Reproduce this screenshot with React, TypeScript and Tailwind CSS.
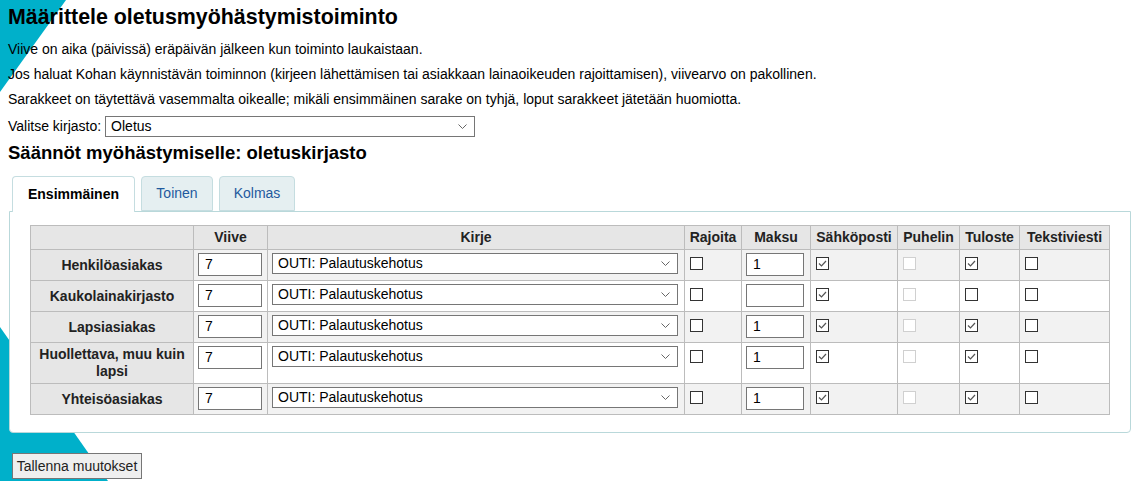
const rows = [
    { name: 'Henkilöasiakas', fee: '1', email: true, print: true },
    { name: 'Kaukolainakirjasto', fee: '', email: true, print: false },
    { name: 'Lapsiasiakas', fee: '1', email: true, print: true },
    { name: 'Huollettava, muu kuin lapsi', fee: '1', email: true, print: true },
    { name: 'Yhteisöasiakas', fee: '1', email: true, print: true },
]

function Chevron() {
    return (
        <svg width="9" height="5" viewBox="0 0 9 5" className="shrink-0">
            <polyline points="0.5,0.5 4.5,4.5 8.5,0.5" fill="none" stroke="#666" strokeWidth="1" />
        </svg>
    )
}

function Select({ value, className }: { value: string; className: string }) {
    return (
        <div
            className={`flex items-center justify-between border border-[#767676] bg-white pr-[7px] pl-[5px] text-[14px] text-black ${className}`}
        >
            <span>{value}</span>
            <Chevron />
        </div>
    )
}

function Box({ checked, disabled }: { checked?: boolean; disabled?: boolean }) {
    return (
        <span
            className={`mt-[4px] ml-[1px] flex h-[13px] w-[13px] items-center justify-center border bg-white ${
                disabled ? 'border-[#d0d0d0]' : 'border-[#333]'
            }`}
        >
            {checked && (
                <svg width="9" height="7" viewBox="0 0 9 7">
                    <polyline points="1,3.5 3.5,6 8,1" fill="none" stroke="#555" strokeWidth="1.2" />
                </svg>
            )}
        </span>
    )
}

function TextBox({ value, className }: { value: string; className: string }) {
    return (
        <div
            className={`flex h-[23px] items-center border border-[#767676] bg-white px-[6px] text-[14px] text-black ${className}`}
        >
            {value}
        </div>
    )
}

export default function App() {
    const cell = 'border border-[#bcbcbc] px-[4px] pt-[3px] pb-[4px] align-top'
    const head = 'border border-[#bcbcbc] bg-[#e6e6e6] px-[2px] py-[3px] text-[14px] leading-[17px] font-bold text-[#222]'

    return (
        <div className="relative min-h-[499px] bg-white font-['Liberation_Sans',Arial,sans-serif] text-black">
            <svg className="absolute top-0 left-0" width="140" height="499" viewBox="0 0 140 499">
                <polygon points="0,0 66,0 0,92" fill="#00b0ca" />
                <polygon points="0,327 108,481 0,481" fill="#00b0ca" />
            </svg>

            <div className="relative px-[8px] pt-[4px]">
                <h1 className="text-[21.4px] leading-[26px] font-bold">Määrittele oletusmyöhästymistoiminto</h1>

                <p className="mt-[11px] text-[14px] leading-[17px]">
                    Viive on aika (päivissä) eräpäivän jälkeen kun toiminto laukaistaan.
                </p>
                <p className="mt-[8px] text-[14px] leading-[17px]">
                    Jos haluat Kohan käynnistävän toiminnon (kirjeen lähettämisen tai asiakkaan lainaoikeuden
                    rajoittamisen), viivearvo on pakollinen.
                </p>
                <p className="mt-[8px] text-[14px] leading-[17px]">
                    Sarakkeet on täytettävä vasemmalta oikealle; mikäli ensimmäinen sarake on tyhjä, loput sarakkeet
                    jätetään huomiotta.
                </p>

                <div className="mt-[8px] flex items-center gap-[4px] text-[14px]">
                    <span>Valitse kirjasto:</span>
                    <Select value="Oletus" className="h-[21px] w-[370px]" />
                </div>

                <h3 className="mt-[5px] text-[18.5px] leading-[22px] font-bold">
                    Säännöt myöhästymiselle: oletuskirjasto
                </h3>

                <div className="mt-[12px] ml-[4px] flex gap-[6px] text-[14px]">
                    <div className="relative z-10 -mb-px flex h-[36px] w-[123px] items-center justify-center rounded-t-[4px] border border-b-0 border-[#c5dde0] bg-white font-bold">
                        Ensimmäinen
                    </div>
                    <div className="flex h-[35px] w-[72px] items-center justify-center rounded-t-[4px] border border-[#c5dde0] bg-[#e5eff1] text-[#1f5a9e]">
                        Toinen
                    </div>
                    <div className="flex h-[35px] w-[76px] items-center justify-center rounded-t-[4px] border border-[#c5dde0] bg-[#e5eff1] text-[#1f5a9e]">
                        Kolmas
                    </div>
                </div>

                <div className="ml-[1px] w-[1122px] rounded-b-[4px] border border-[#b9d8da] bg-white pt-[13px] pb-[17px] pl-[20px]">
                    <table className="w-[1079px] table-fixed border-collapse text-[14px]">
                        <colgroup>
                            <col className="w-[163px]" />
                            <col className="w-[74px]" />
                            <col className="w-[417px]" />
                            <col className="w-[57px]" />
                            <col className="w-[69px]" />
                            <col className="w-[87px]" />
                            <col className="w-[62px]" />
                            <col className="w-[60px]" />
                            <col className="w-[90px]" />
                        </colgroup>
                        <thead>
                            <tr>
                                <th className={head}></th>
                                <th className={head}>Viive</th>
                                <th className={head}>Kirje</th>
                                <th className={head}>Rajoita</th>
                                <th className={head}>Maksu</th>
                                <th className={head}>Sähköposti</th>
                                <th className={head}>Puhelin</th>
                                <th className={head}>Tuloste</th>
                                <th className={head}>Tekstiviesti</th>
                            </tr>
                        </thead>
                        <tbody>
                            {rows.map((r, i) => (
                                <tr key={r.name} className={i % 2 === 0 ? 'bg-[#f2f2f2]' : 'bg-white'}>
                                    <th className="border border-[#bcbcbc] bg-[#e6e6e6] px-[4px] py-[3px] text-center align-middle text-[14px] leading-[17px] font-bold text-[#222]">
                                        {r.name}
                                    </th>
                                    <td className={cell}>
                                        <TextBox value="7" className="w-[64px]" />
                                    </td>
                                    <td className={cell}>
                                        <Select value="OUTI: Palautuskehotus" className="h-[21px] w-[406px]" />
                                    </td>
                                    <td className={cell}>
                                        <Box />
                                    </td>
                                    <td className={cell}>
                                        <TextBox value={r.fee} className="w-[58px]" />
                                    </td>
                                    <td className={cell}>
                                        <Box checked={r.email} />
                                    </td>
                                    <td className={cell}>
                                        <Box disabled />
                                    </td>
                                    <td className={cell}>
                                        <Box checked={r.print} />
                                    </td>
                                    <td className={cell}>
                                        <Box />
                                    </td>
                                </tr>
                            ))}
                        </tbody>
                    </table>
                </div>

                <button className="mt-[20px] ml-[4px] h-[26px] w-[130px] border border-[#767676] bg-[#efefef] text-[14px] text-[#222]">
                    Tallenna muutokset
                </button>
            </div>
        </div>
    )
}
